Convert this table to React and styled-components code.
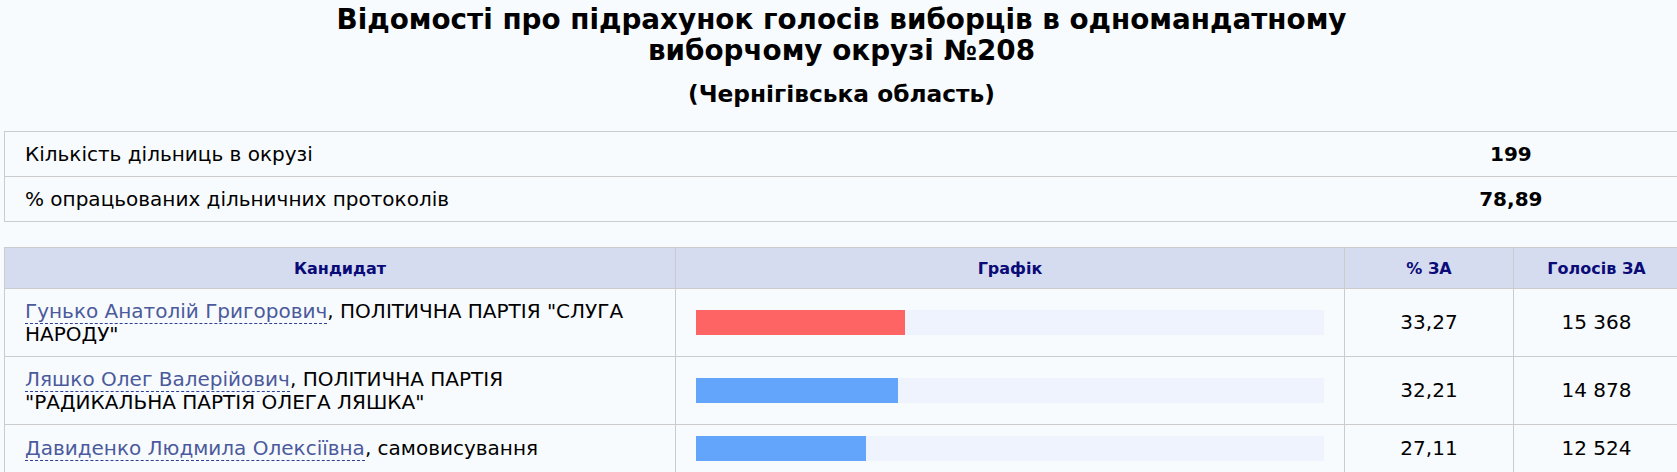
import React from "react";
import styled, { createGlobalStyle } from "styled-components";

const GlobalStyle = createGlobalStyle`
  html, body {
    margin: 0;
    padding: 0;
    background: #f8fbfd;
    overflow: hidden;
  }
  body {
    font-family: "DejaVu Sans", Verdana, sans-serif;
    color: #000;
  }
`;

const Page = styled.div`
  width: 1675px;
  margin-left: 4px;
`;

const Title = styled.h1`
  margin: 0;
  padding-top: 4px;
  text-align: center;
  font-size: 27.8px;
  line-height: 31px;
  font-weight: bold;
`;

const Subtitle = styled.h2`
  margin: 15px 0 0;
  text-align: center;
  font-size: 23.3px;
  line-height: 26px;
  font-weight: bold;
`;

const InfoTable = styled.table`
  width: 100%;
  margin-top: 24px;
  border-collapse: collapse;
  border: 1px solid #cccccc;
  font-size: 20px;
  line-height: 23px;
`;

const InfoLabel = styled.td`
  width: 80%;
  padding: 10.5px 20px;
  border-top: 1px solid #cccccc;
  text-align: left;
`;

const InfoValue = styled.td`
  width: 20%;
  padding: 10.5px 20px;
  border-top: 1px solid #cccccc;
  text-align: center;
  font-weight: bold;
`;

const ResultsTable = styled.table`
  width: 1675px;
  margin-top: 25px;
  border-collapse: collapse;
  border: 1px solid #cccccc;
  table-layout: fixed;
  font-size: 20px;
  line-height: 23px;
`;

const Col = styled.col`
  width: ${(p) => p.$w}px;
`;

const HeadCell = styled.th`
  padding: 10.5px 10px;
  background: #d5dcf0;
  color: #0b0b78;
  font-size: 16px;
  line-height: 19px;
  font-weight: bold;
  text-align: center;
  border: 1px solid #cccccc;
`;

const Cell = styled.td`
  padding: 10.6px 20px;
  border: 1px solid #cccccc;
  vertical-align: middle;
  text-align: ${(p) => (p.$center ? "center" : "left")};
`;

const CandidateLink = styled.a`
  color: #4b5a9c;
  text-decoration: none;
  border-bottom: 1px dashed #2f3f95;
`;

const Track = styled.div`
  height: 25px;
  background: #eef3fd;
  display: flex;
`;

const Fill = styled.div`
  height: 100%;
  background: ${(p) => (p.$leader ? "#ff6464" : "#62a5fb")};
`;

const candidates = [
  {
    name: "Гунько Анатолій Григорович",
    party: 'ПОЛІТИЧНА ПАРТІЯ "СЛУГА НАРОДУ"',
    pct: 33.27,
    pctText: "33,27",
    votes: "15 368",
  },
  {
    name: "Ляшко Олег Валерійович",
    party: 'ПОЛІТИЧНА ПАРТІЯ "РАДИКАЛЬНА ПАРТІЯ ОЛЕГА ЛЯШКА"',
    pct: 32.21,
    pctText: "32,21",
    votes: "14 878",
  },
  {
    name: "Давиденко Людмила Олексіївна",
    party: "самовисування",
    pct: 27.11,
    pctText: "27,11",
    votes: "12 524",
  },
];

export default function App() {
  return (
    <Page>
      <GlobalStyle />
      <Title>
        Відомості про підрахунок голосів виборців в одномандатному
        <br />
        виборчому окрузі №208
      </Title>
      <Subtitle>(Чернігівська область)</Subtitle>

      <InfoTable>
        <tbody>
          <tr>
            <InfoLabel>Кількість дільниць в окрузі</InfoLabel>
            <InfoValue>199</InfoValue>
          </tr>
          <tr>
            <InfoLabel>% опрацьованих дільничних протоколів</InfoLabel>
            <InfoValue>78,89</InfoValue>
          </tr>
        </tbody>
      </InfoTable>

      <ResultsTable>
        <colgroup>
          <Col $w={671} />
          <Col $w={669} />
          <Col $w={169} />
          <Col $w={166} />
        </colgroup>
        <thead>
          <tr>
            <HeadCell>Кандидат</HeadCell>
            <HeadCell>Графік</HeadCell>
            <HeadCell>% ЗА</HeadCell>
            <HeadCell>Голосів ЗА</HeadCell>
          </tr>
        </thead>
        <tbody>
          {candidates.map((c, i) => (
            <tr key={c.name}>
              <Cell>
                <CandidateLink href="#">{c.name}</CandidateLink>, {c.party}
              </Cell>
              <Cell>
                <Track>
                  <Fill $leader={i === 0} style={{ width: `${c.pct}%` }} />
                </Track>
              </Cell>
              <Cell $center>{c.pctText}</Cell>
              <Cell $center>{c.votes}</Cell>
            </tr>
          ))}
        </tbody>
      </ResultsTable>
    </Page>
  );
}
